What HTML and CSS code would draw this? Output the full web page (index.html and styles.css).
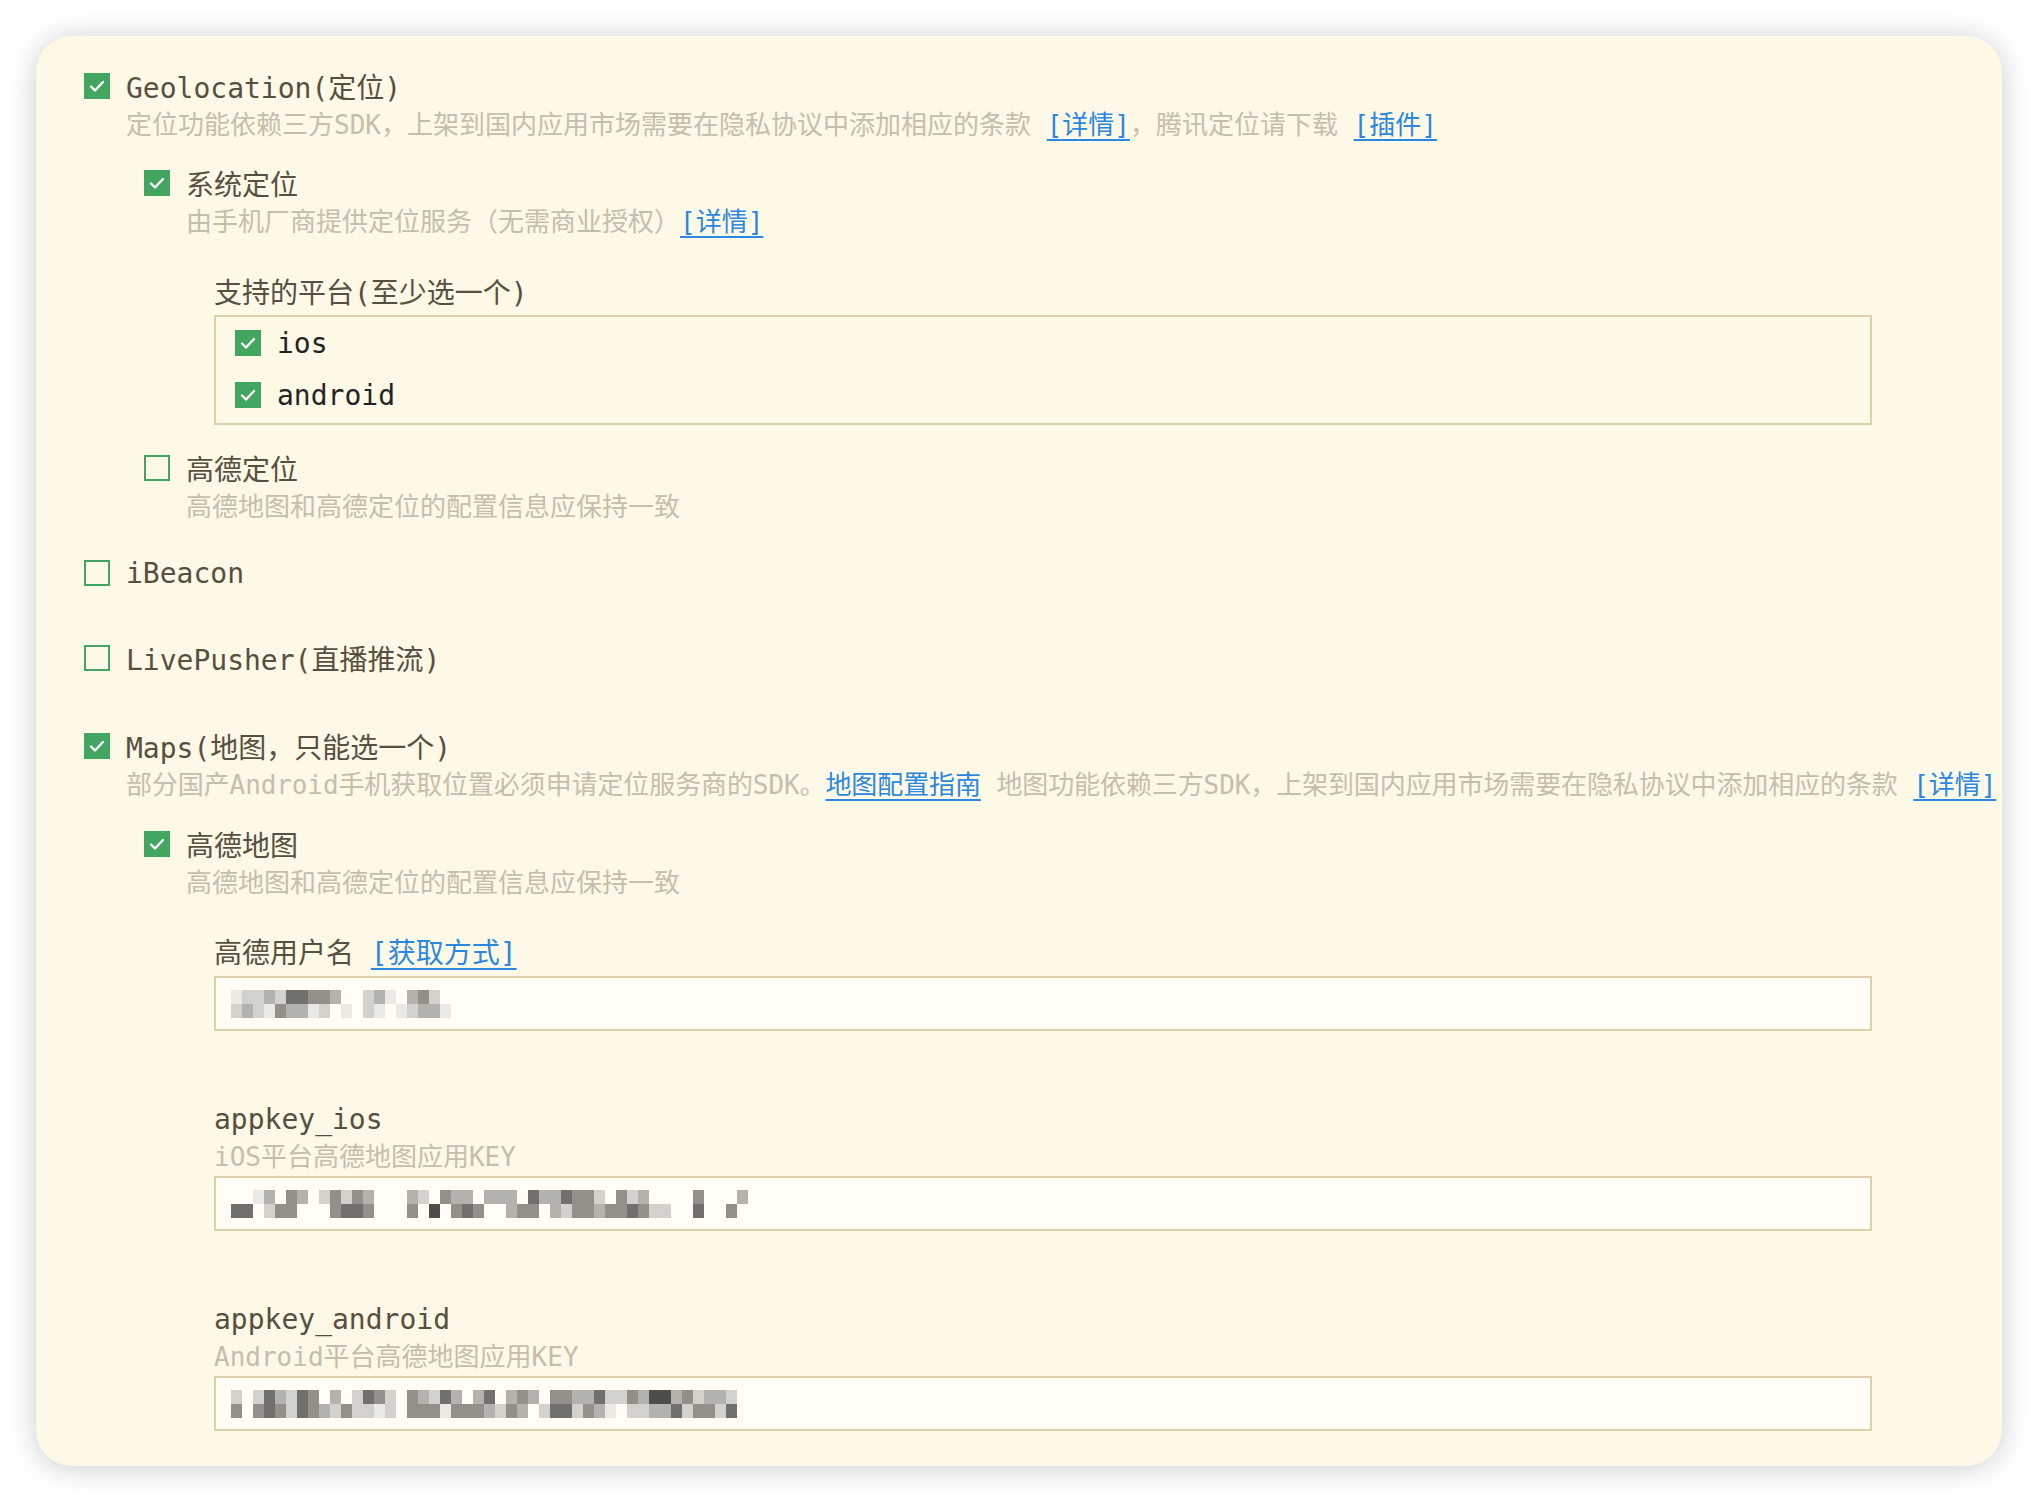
FILE: index.html
```html
<!DOCTYPE html>
<html lang="zh-CN">
<head>
    <meta charset="UTF-8">
    <meta name="viewport" content="width=device-width, initial-scale=1.0">
    <title>模块配置</title>
    <link rel="stylesheet" href="styles.css">
</head>
<body>
    <div class="card">
        <div class="item">
            <div class="check-row">
                <span class="cb checked"><svg viewBox="0 0 22 22"><polyline points="5,11.5 9,15.5 17,7"/></svg></span>
                <span class="title">Geolocation(定位)</span>
            </div>
            <div class="body">
                <div class="desc">定位功能依赖三方SDK，上架到国内应用市场需要在隐私协议中添加相应的条款 <a href="#">[详情]</a>，腾讯定位请下载 <a href="#">[插件]</a></div>
                <div class="sub">
                    <div class="item">
                        <div class="check-row">
                            <span class="cb checked"><svg viewBox="0 0 22 22"><polyline points="5,11.5 9,15.5 17,7"/></svg></span>
                            <span class="title">系统定位</span>
                        </div>
                        <div class="body">
                            <div class="desc">由手机厂商提供定位服务（无需商业授权）<a href="#">[详情]</a></div>
                            <div class="group">
                                <div class="group-label">支持的平台(至少选一个)</div>
                                <div class="group-box">
                                    <div class="check-row option">
                                        <span class="cb checked"><svg viewBox="0 0 22 22"><polyline points="5,11.5 9,15.5 17,7"/></svg></span>
                                        <span class="title dark">ios</span>
                                    </div>
                                    <div class="check-row option">
                                        <span class="cb checked"><svg viewBox="0 0 22 22"><polyline points="5,11.5 9,15.5 17,7"/></svg></span>
                                        <span class="title dark">android</span>
                                    </div>
                                </div>
                            </div>
                        </div>
                    </div>
                    <div class="item next">
                        <div class="check-row">
                            <span class="cb"></span>
                            <span class="title">高德定位</span>
                        </div>
                        <div class="body">
                            <div class="desc">高德地图和高德定位的配置信息应保持一致</div>
                        </div>
                    </div>
                </div>
            </div>
        </div>

        <div class="item gap-small">
            <div class="check-row">
                <span class="cb"></span>
                <span class="title">iBeacon</span>
            </div>
        </div>

        <div class="item gap">
            <div class="check-row">
                <span class="cb"></span>
                <span class="title">LivePusher(直播推流)</span>
            </div>
        </div>

        <div class="item gap-large">
            <div class="check-row">
                <span class="cb checked"><svg viewBox="0 0 22 22"><polyline points="5,11.5 9,15.5 17,7"/></svg></span>
                <span class="title">Maps(地图，只能选一个)</span>
            </div>
            <div class="body">
                <div class="desc nowrap">部分国产Android手机获取位置必须申请定位服务商的SDK。<a href="#">地图配置指南</a> 地图功能依赖三方SDK，上架到国内应用市场需要在隐私协议中添加相应的条款 <a href="#">[详情]</a></div>
                <div class="sub sub-maps">
                    <div class="item">
                        <div class="check-row">
                            <span class="cb checked"><svg viewBox="0 0 22 22"><polyline points="5,11.5 9,15.5 17,7"/></svg></span>
                            <span class="title">高德地图</span>
                        </div>
                        <div class="body">
                            <div class="desc">高德地图和高德定位的配置信息应保持一致</div>
                            <div class="field first">
                                <div class="field-label">高德用户名 <a href="#">[获取方式]</a></div>
                                <div class="input"><div class="mosaic" data-rows="12232554430023103420|23214331201021012331"></div></div>
                            </div>
                            <div class="field">
                                <div class="field-label">appkey_ios</div>
                                <div class="field-desc">iOS平台高德地图应用KEY</div>
                                <div class="input"><div class="mosaic" data-rows="001304302424300032043303330533544204230000400030|550244000455400040604540034403244344542200500400"></div></div>
                            </div>
                            <div class="field">
                                <div class="field-label">appkey_android</div>
                                <div class="field-desc">Android平台高德地图应用KEY</div>
                                <div class="input"><div class="mosaic" data-rows="202532540302542043253035034304433522436634233200|404542543242212044414443243025524310223352442500"></div></div>
                            </div>
                        </div>
                    </div>
                </div>
            </div>
        </div>
    </div>

    <script>
        // blurred key values drawn as mosaic cells
        document.querySelectorAll('.mosaic').forEach(function (el) {
            el.dataset.rows.split('|').forEach(function (row) {
                const line = document.createElement('div');
                line.className = 'mosaic-row';
                for (const c of row) {
                    const cell = document.createElement('span');
                    cell.className = 'm' + c;
                    line.appendChild(cell);
                }
                el.appendChild(line);
            });
        });
    </script>
</body>
</html>
```

FILE: styles.css
```css
html, body {
    margin: 0;
    background-color: #ffffff;
}
body {
    padding: 36px;
    overflow: hidden;
    font-family: "DejaVu Sans Mono", "Noto Sans CJK SC", monospace;
}
.card {
    background-color: #fef8e6;
    border-radius: 36px;
    box-shadow: 0 2px 30px rgba(0, 0, 0, 0.2);
    padding: 30px 48px 35px 48px;
}
.check-row {
    display: flex;
    align-items: center;
    gap: 16px;
    height: 40px;
}
.cb {
    width: 26px;
    height: 26px;
    box-sizing: border-box;
    border: 2px solid #42a660;
    flex-shrink: 0;
}
.cb.checked {
    background-color: #42a660;
}
.cb svg {
    display: block;
    width: 22px;
    height: 22px;
}
.cb polyline {
    fill: none;
    stroke: #ffffff;
    stroke-width: 2.4;
    stroke-linecap: round;
    stroke-linejoin: round;
}
.title {
    font-size: 28px;
    color: #574f40;
    white-space: nowrap;
}
.title.dark {
    color: #262422;
}
.body {
    margin-left: 42px;
}
.desc {
    font-size: 26px;
    line-height: 38px;
    color: #c6beab;
}
.desc.nowrap {
    white-space: nowrap;
    letter-spacing: -0.1px;
}
a {
    color: #2b88e0;
    text-decoration: underline;
    text-decoration-thickness: 2px;
    text-underline-offset: 5px;
}
.sub {
    margin-left: 18px;
    margin-top: 19px;
}
.sub-maps {
    margin-top: 20px;
}
.item.next {
    margin-top: 23px;
}
.item.gap-small {
    margin-top: 27px;
}
.item.gap {
    margin-top: 45px;
}
.item.gap-large {
    margin-top: 48px;
}
.group {
    margin-left: 28px;
    margin-top: 33px;
}
.group-label,
.field-label {
    font-size: 28px;
    line-height: 40px;
    color: #574f40;
}
.group-box {
    width: 1658px;
    box-sizing: border-box;
    border: 2px solid #dcd1a8;
    margin-top: 1px;
    padding: 0 19px 2px 19px;
}
.option {
    height: 52px;
}
.field {
    margin-left: 28px;
    margin-top: 69px;
}
.field.first {
    margin-top: 32px;
}
.field-desc {
    font-size: 26px;
    line-height: 34px;
    color: #c6beab;
}
.input {
    width: 1658px;
    height: 55px;
    box-sizing: border-box;
    border: 2px solid #dcd1a8;
    background-color: #fffdf6;
    margin-top: 2px;
    padding: 0 15px;
    display: flex;
    align-items: center;
}
.mosaic-row {
    display: flex;
}
.mosaic-row span {
    width: 11px;
    height: 14px;
}
.m1 { background-color: #ebe9e4; }
.m2 { background-color: #d3d1cc; }
.m3 { background-color: #b4b2ad; }
.m4 { background-color: #929089; }
.m5 { background-color: #72706c; }
.m6 { background-color: #4f4d4a; }
```
